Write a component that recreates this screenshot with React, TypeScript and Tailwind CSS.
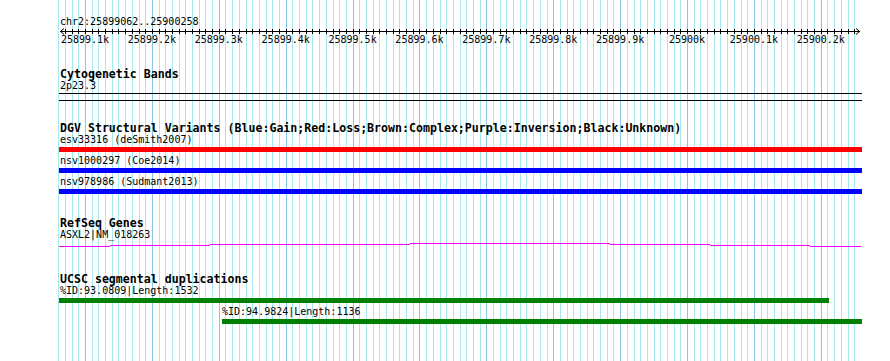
import React from "react";

const START = 25899062;
const SCALE = 0.6689;
const X = (bp: number) => 59.6 + (bp - START) * SCALE;
const OX = 59; // content origin

const gridLines: { x: number; major: boolean }[] = [];
for (let bp = 25899060; bp <= 25900250; bp += 10) {
  gridLines.push({ x: Math.round(X(bp)), major: bp % 100 === 0 });
}

const majorLabels: { x: number; label: string }[] = [];
for (let bp = 25899100; bp <= 25900200; bp += 100) {
  const k = bp / 1000;
  const s = Number.isInteger(k) ? `${k}k` : `${k.toFixed(1)}k`;
  majorLabels.push({ x: X(bp), label: s });
}

function Grid() {
  return (
    <svg className="absolute left-0 top-0" width={890} height={361} shapeRendering="crispEdges">
      {gridLines.map((g, i) => (
        <line
          key={i}
          x1={g.x + 0.5}
          x2={g.x + 0.5}
          y1={0}
          y2={361}
          stroke={g.major ? "#86c6ea" : "#a6e8ee"}
          strokeWidth={1}
        />
      ))}
    </svg>
  );
}

function Ruler() {
  const ticks: number[] = [];
  for (let bp = 25899070; bp <= 25900250; bp += 10) ticks.push(Math.round(X(bp)) - OX);
  return (
    <svg width={803} height={8} className="block" shapeRendering="crispEdges">
      <line x1={1} x2={801} y1={4.5} y2={4.5} stroke="#000" strokeWidth={1} />
      {ticks.map((t, i) => (
        <line key={i} x1={t + 0.5} x2={t + 0.5} y1={2} y2={7} stroke="#000" strokeWidth={1} />
      ))}
      <polyline points="5,1.5 1.5,4.5 5,7.5" fill="none" stroke="#000" strokeWidth={1} shapeRendering="auto" />
      <polyline points="797,1.5 800.5,4.5 797,7.5" fill="none" stroke="#000" strokeWidth={1} shapeRendering="auto" />
    </svg>
  );
}

function Header({ children }: { children: React.ReactNode }) {
  return (
    <div className="h-[12px] pl-[1px] text-[11.6px] leading-[12px] font-bold whitespace-nowrap text-black">{children}</div>
  );
}

function Label({ children, className = "" }: { children: React.ReactNode; className?: string }) {
  return (
    <div className={`h-[10px] pl-[1px] text-[10px] leading-[10px] whitespace-nowrap text-black ${className}`}>{children}</div>
  );
}

function GeneLine() {
  const segs: [number, number, number][] = [
    [59, 110, 246],
    [110, 210, 245],
    [210, 410, 244],
    [410, 610, 243],
    [610, 710, 244],
    [710, 810, 245],
    [810, 861, 246],
  ];
  return (
    <svg width={803} height={8} className="block" shapeRendering="crispEdges">
      {segs.map(([a, b, y], i) => (
        <line key={i} x1={a - OX} x2={b - OX} y1={y - 240 + 0.5} y2={y - 240 + 0.5} stroke="#ff00ff" strokeWidth={1} />
      ))}
    </svg>
  );
}

export default function App() {
  return (
    <div className="relative w-[890px] h-[361px] overflow-hidden bg-white font-['DejaVu_Sans_Mono',monospace]">
      <Grid />
      <div className="relative ml-[59px] w-[803px] flex flex-col">
        {/* Ruler */}
        <div className="pt-[17px]">
          <Label>chr2:25899062..25900258</Label>
          <Ruler />
          <div className="relative h-[10px]">
            {majorLabels.map((m, i) => (
              <span
                key={i}
                className="absolute top-0 -translate-x-1/2 text-[10px] leading-[10px] whitespace-nowrap text-black"
                style={{ left: m.x - OX }}
              >
                {m.label}
              </span>
            ))}
          </div>
        </div>

        {/* Cytogenetic Bands */}
        <div className="mt-[23px]">
          <Header>Cytogenetic Bands</Header>
          <Label className="mt-[1px]">2p23.3</Label>
          <div className="mt-[2px] h-[8px] border-y border-black" />
        </div>

        {/* DGV */}
        <div className="mt-[21px] flex flex-col">
          <Header>DGV Structural Variants (Blue:Gain;Red:Loss;Brown:Complex;Purple:Inversion;Black:Unknown)</Header>
          <Label className="mt-[1px]">esv33316 (deSmith2007)</Label>
          <div className="mt-[2px] h-[5px] bg-[#ff0000]" />
          <Label className="mt-[4px]">nsv1000297 (Coe2014)</Label>
          <div className="mt-[2px] h-[5px] bg-[#0000ff]" />
          <Label className="mt-[4px]">nsv978986 (Sudmant2013)</Label>
          <div className="mt-[2px] h-[5px] bg-[#0000ff]" />
        </div>

        {/* RefSeq */}
        <div className="mt-[23px]">
          <Header>RefSeq Genes</Header>
          <Label className="mt-[1px]">ASXL2|NM_018263</Label>
          <GeneLine />
        </div>

        {/* UCSC */}
        <div className="mt-[25px] flex flex-col">
          <Header>UCSC segmental duplications</Header>
          <Label className="mt-[1px]">%ID:93.0809|Length:1532</Label>
          <div className="mt-[2px] h-[5px] w-[770px] bg-[#008000]" />
          <Label className="mt-[4px] ml-[162px]">%ID:94.9824|Length:1136</Label>
          <div className="mt-[2px] ml-[163px] h-[5px] w-[640px] bg-[#008000]" />
        </div>
      </div>
    </div>
  );
}
